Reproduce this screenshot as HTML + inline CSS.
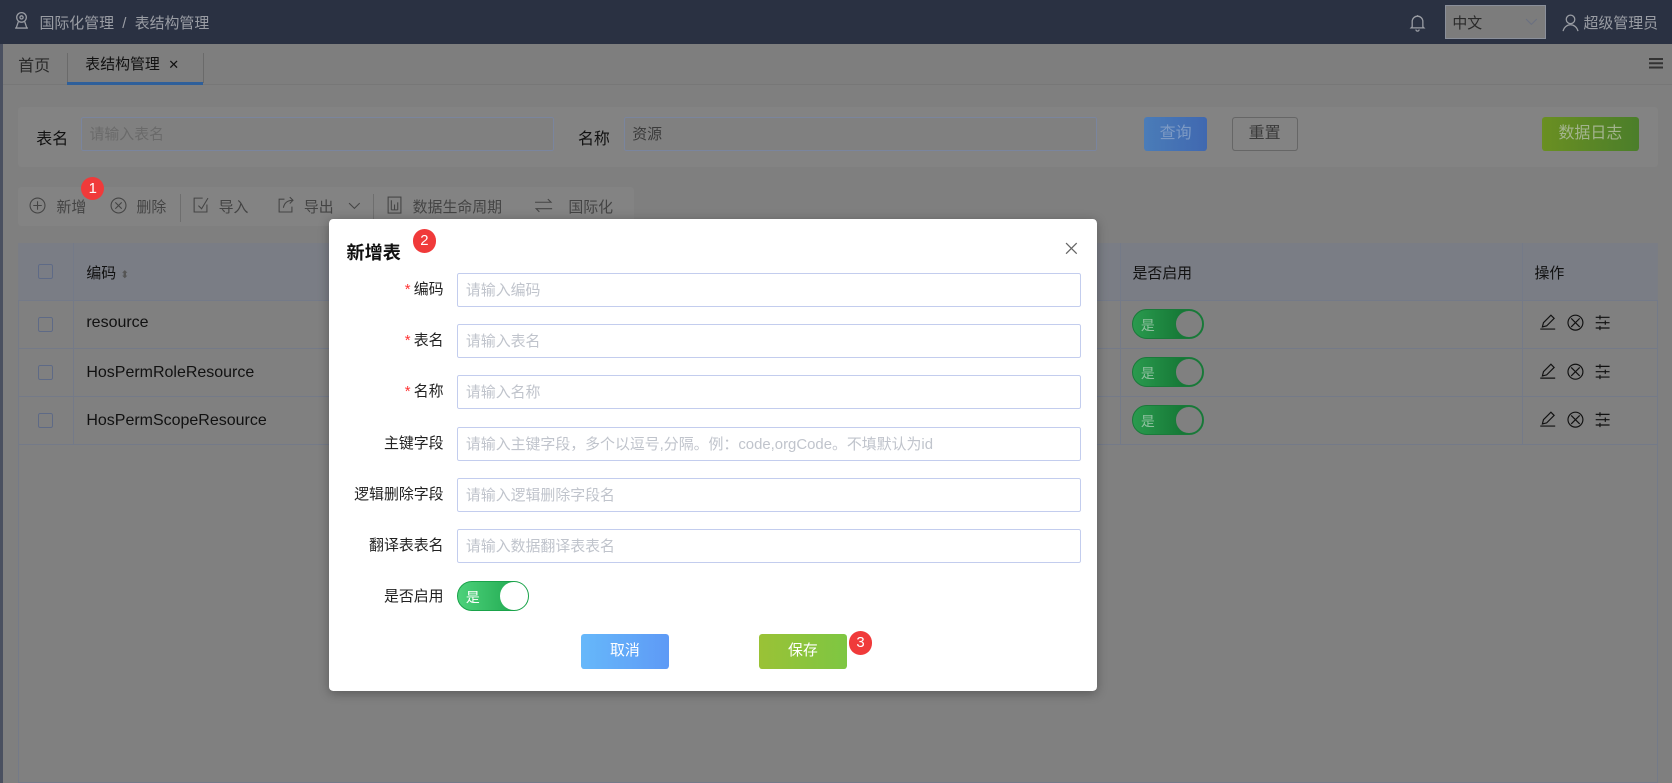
<!DOCTYPE html>
<html><head><meta charset="utf-8">
<style>
*{box-sizing:border-box;margin:0;padding:0}
html,body{width:1672px;height:783px;overflow:hidden;background:#7f7f7f}
#w{zoom:1.06633;width:1568px;height:734px;position:relative;font-family:"Liberation Sans","Noto Sans CJK SC",sans-serif;font-size:14px;color:#111}
.a{position:absolute}
.hd{left:0;top:0;width:1568px;height:41px;background:#2a3142}
.tx{color:#9a9da4;font-size:14px}
.inp{position:absolute;border:1px solid #7a859e;border-radius:2px;background:#808080;height:32px;padding-left:7px;line-height:32px;color:#6a6a6a}
.badge{position:absolute;width:22px;height:22px;border-radius:50%;background:#f03a3a;color:#fff;font-size:14px;text-align:center;line-height:22px}
.mi{position:absolute;left:120px;width:585px;height:32px;border:1px solid #c3cdee;border-radius:2px;padding-left:7px;line-height:31px;color:#c0c4cc;font-size:14px}
.ml{position:absolute;right:613px;width:110px;text-align:right;font-size:14px;color:#222;line-height:32px}
.st{color:#f33;margin-right:3px}
.sw{position:absolute;width:67px;height:28px;border-radius:14px;background:linear-gradient(90deg,#4cd17a,#1aa34a);border:1px solid #1aa34a}
.sw i{position:absolute;right:0;top:0;width:26px;height:26px;border-radius:50%;background:#fff}
.sw b{position:absolute;left:7px;top:4px;color:#fff;font-weight:normal;font-size:13px}
.tsw{position:absolute;left:1062px;width:67px;height:28px;border-radius:14px;background:linear-gradient(90deg,#2a9a4e,#0d6a2c);border:1px solid #1a7a3a}
.tsw i{position:absolute;right:0;top:0;width:26px;height:26px;border-radius:50%;background:#808080;border:1px solid #1a7a3a}
.tsw b{position:absolute;left:7px;top:4px;color:#8fc09f;font-weight:normal;font-size:13px}
.row{position:absolute;left:17px;width:1538px;height:45px;border-bottom:1px solid #747a88}
.cb{position:absolute;left:19px;width:14px;height:14px;border:1px solid #5e6a86;border-radius:2px}
.tb{position:absolute;top:184px;color:#444;font-size:14px}
</style></head><body><div id="w">
<div class="a hd"></div>
<div class="a" style="left:0;top:41px;width:3px;height:693px;background:#4a5060"></div>
<svg class="a" style="left:12px;top:10px" width="16" height="18" viewBox="0 0 16 18" fill="none" stroke="#9a9da4" stroke-width="1.2"><circle cx="8" cy="6" r="4.5"/><circle cx="8" cy="6" r="1.5"/><path d="M5 10l-2 6h10l-2-6M2 16h12"/></svg>
<div class="a tx" style="left:37px;top:11px">国际化管理 &nbsp;/&nbsp; 表结构管理</div>
<svg class="a" style="left:1321px;top:12px" width="16" height="18" viewBox="0 0 16 18" fill="none" stroke="#9a9da4" stroke-width="1.2"><path d="M3 13V8a5 5 0 0110 0v5l1 1H2zM6.5 15.5a1.5 1.5 0 003 0M8 2v1"/></svg>
<div class="a" style="left:1355px;top:5px;width:95px;height:32px;background:#7c7c7c;border:1px solid #8a8f9a"></div>
<div class="a" style="left:1362px;top:11px;color:#2a2a2a;font-size:14px">中文</div>
<svg class="a" style="left:1430px;top:17px" width="12" height="8" viewBox="0 0 12 8" fill="none" stroke="#6a7080"><path d="M1 1l5 5 5-5"/></svg>
<svg class="a" style="left:1465px;top:12px" width="16" height="18" viewBox="0 0 16 18" fill="none" stroke="#9a9da4" stroke-width="1.2"><circle cx="8" cy="6" r="4"/><path d="M1 17c1-4 4-6 7-6s6 2 7 6"/></svg>
<div class="a tx" style="left:1485px;top:11px;font-size:14px">超级管理员</div>
<!-- tabs -->
<div class="a" style="left:3px;top:41px;width:1565px;height:39px;background:#7e7e7e;border-bottom:1px solid #777"></div>
<div class="a" style="left:17px;top:49px;font-size:15px;color:#2a2a2a">首页</div>
<div class="a" style="left:63px;top:50px;width:1px;height:28px;background:#6a6a6a"></div>
<div class="a" style="left:190px;top:50px;width:1px;height:28px;background:#6a6a6a"></div>
<div class="a" style="left:80px;top:50px;font-size:14px;color:#111">表结构管理 <span style="font-size:12px;margin-left:4px">✕</span></div>
<div class="a" style="left:63px;top:77px;width:127px;height:3px;background:#2e5f9a"></div>
<div class="a" style="left:1546px;top:54px;width:14px;height:2px;background:#333;box-shadow:0 4px #333,0 8px #333"></div>
<!-- search card -->
<div class="a" style="left:17px;top:100px;width:1538px;height:57px;background:#838383;border-radius:3px"></div>
<div class="a" style="left:34px;top:117px;font-size:15px;color:#111">表名</div>
<div class="inp" style="left:76px;top:110px;width:444px">请输入表名</div>
<div class="a" style="left:542px;top:117px;font-size:15px;color:#111">名称</div>
<div class="inp" style="left:585px;top:110px;width:444px;color:#3a3a3a">资源</div>
<div class="a" style="left:1073px;top:110px;width:59px;height:32px;border-radius:3px;background:linear-gradient(90deg,#4a7cb8,#4068b0);color:#7d9ac4;text-align:center;line-height:32px;font-size:15px">查询</div>
<div class="a" style="left:1155px;top:110px;width:62px;height:32px;border-radius:3px;border:1px solid #666;color:#3a3a3a;text-align:center;line-height:30px;font-size:15px">重置</div>
<div class="a" style="left:1446px;top:110px;width:91px;height:32px;border-radius:3px;background:linear-gradient(90deg,#6a8f22,#4b7e2a);color:#a3b48e;text-align:center;line-height:32px;font-size:15px">数据日志</div>
<!-- toolbar -->
<div class="a" style="left:17px;top:175px;width:578px;height:37px;background:#838383;border-radius:3px"></div>
<svg class="a" style="left:27px;top:185px" width="16" height="16" viewBox="0 0 16 16" fill="none" stroke="#444"><circle cx="8" cy="8" r="7"/><path d="M4 8h8M8 4v8"/></svg>
<div class="tb" style="left:53px">新增</div>
<svg class="a" style="left:103px;top:185px" width="16" height="16" viewBox="0 0 16 16" fill="none" stroke="#444"><circle cx="8" cy="8" r="7"/><path d="M5 5l6 6M11 5l-6 6"/></svg>
<div class="tb" style="left:128px">删除</div>
<div class="a" style="left:169px;top:182px;width:1px;height:26px;background:#6e6e6e"></div>
<svg class="a" style="left:180px;top:184px" width="16" height="17" viewBox="0 0 16 17" fill="none" stroke="#444"><path d="M10 2H2v13h12V8M6 9l3 3 6-10"/></svg>
<div class="tb" style="left:205px">导入</div>
<svg class="a" style="left:260px;top:184px" width="16" height="17" viewBox="0 0 16 17" fill="none" stroke="#444"><path d="M7 3H2v12h12v-5M6 11c1-5 4-7 9-7M12 1l3 3-3 3"/></svg>
<div class="tb" style="left:285px">导出</div>
<svg class="a" style="left:326px;top:189px" width="12" height="8" viewBox="0 0 12 8" fill="none" stroke="#444"><path d="M1 1l5 5 5-5"/></svg>
<div class="a" style="left:350px;top:182px;width:1px;height:26px;background:#6e6e6e"></div>
<svg class="a" style="left:362px;top:184px" width="16" height="17" viewBox="0 0 16 17" fill="none" stroke="#444"><rect x="2" y="1" width="12" height="15"/><path d="M5 4v9M8 8v5M11 6v7M5 13h6"/></svg>
<div class="tb" style="left:387px">数据生命周期</div>
<svg class="a" style="left:501px;top:186px" width="18" height="14" viewBox="0 0 18 14" fill="none" stroke="#444"><path d="M1 4h15l-3-3M17 10H2l3 3"/></svg>
<div class="tb" style="left:533px">国际化</div>
<div class="badge" style="left:76px;top:166px">1</div>
<!-- table -->
<div class="a" style="left:17px;top:228px;width:1538px;height:506px;background:#808080;border:1px solid #747a88"></div>
<div class="a" style="left:17px;top:228px;width:1538px;height:54px;background:#7a7d85;border-bottom:1px solid #747a88"></div>
<div class="a" style="left:68px;top:228px;width:1px;height:189px;background:#747a88"></div>
<div class="a" style="left:1050px;top:228px;width:1px;height:189px;background:#747a88"></div>
<div class="a" style="left:1427px;top:228px;width:1px;height:189px;background:#747a88"></div>
<div class="cb" style="left:36px;top:248px"></div>
<div class="a" style="left:81px;top:246px;font-size:14px">编码 <span style="color:#555;font-size:10px">⬍</span></div>
<div class="a" style="left:1062px;top:246px">是否启用</div>
<div class="a" style="left:1439px;top:246px">操作</div>
<div class="row" style="top:282px"></div><div class="row" style="top:327px"></div><div class="row" style="top:372px"></div>
<div class="cb" style="left:36px;top:297px"></div><div class="cb" style="left:36px;top:342px"></div><div class="cb" style="left:36px;top:387px"></div>
<div class="a" style="left:81px;top:294px;font-size:15px">resource</div>
<div class="a" style="left:81px;top:341px;font-size:15px">HosPermRoleResource</div>
<div class="a" style="left:81px;top:386px;font-size:15px">HosPermScopeResource</div>
<div class="tsw" style="top:290px"><b>是</b><i></i></div>
<div class="tsw" style="top:335px"><b>是</b><i></i></div>
<div class="tsw" style="top:380px"><b>是</b><i></i></div>
<svg class="a" style="left:1440px;top:293px" width="72" height="110" viewBox="0 0 72 110" fill="none" stroke="#111" stroke-width="1.1">
<g id="ic"><path d="M4 16h14M6 14l1-4 7-7 3 3-7 7z"/><circle cx="37" cy="10" r="7"/><path d="M33 6l8 8M41 6l-8 8"/><path d="M56 5h13M56 10h13M56 15h13M60 3v4M65 8v4M60 13v4"/></g>
<use href="#ic" y="46"/><use href="#ic" y="91"/>
</svg>
<!-- modal -->
<div class="a" style="left:309px;top:205px;width:720px;height:443px;background:#fff;border-radius:4px;box-shadow:0 2px 10px rgba(0,0,0,.3)">
<div class="a" style="left:16px;top:19px;font-size:17px;font-weight:bold;color:#111">新增表</div>
<div class="badge" style="left:78px;top:10px">2</div>
<svg class="a" style="left:690px;top:22px" width="12" height="12" viewBox="0 0 12 12" stroke="#666" stroke-width="1.2"><path d="M1 1l10 10M11 1L1 11"/></svg>
<div class="ml" style="top:51px"><span class="st">*</span>编码</div><div class="mi" style="top:51px">请输入编码</div>
<div class="ml" style="top:99px"><span class="st">*</span>表名</div><div class="mi" style="top:99px">请输入表名</div>
<div class="ml" style="top:147px"><span class="st">*</span>名称</div><div class="mi" style="top:147px">请输入名称</div>
<div class="ml" style="top:195px">主键字段</div><div class="mi" style="top:195px">请输入主键字段，多个以逗号,分隔。例：code,orgCode。不填默认为id</div>
<div class="ml" style="top:243px">逻辑删除字段</div><div class="mi" style="top:243px">请输入逻辑删除字段名</div>
<div class="ml" style="top:291px">翻译表表名</div><div class="mi" style="top:291px">请输入数据翻译表表名</div>
<div class="ml" style="top:339px">是否启用</div>
<div class="sw" style="left:120px;top:340px"><b>是</b><i></i></div>
<div class="a" style="left:236px;top:390px;width:82px;height:32px;border-radius:3px;background:linear-gradient(90deg,#66b8fa,#5e9af6);color:#fff;text-align:center;line-height:32px">取消</div>
<div class="a" style="left:403px;top:390px;width:82px;height:32px;border-radius:3px;background:linear-gradient(90deg,#9ac236,#7ec642);color:#fff;text-align:center;line-height:32px">保存</div>
<div class="badge" style="left:487px;top:387px">3</div>
</div>
</div></body></html>
